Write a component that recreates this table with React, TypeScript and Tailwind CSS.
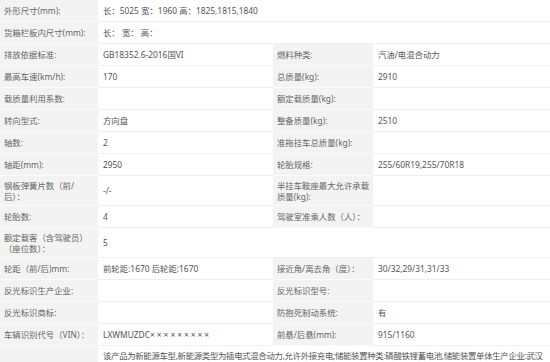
import React from "react";

// ─── Types ───────────────────────────────────────────────────────────────────

type Cell = { label: React.ReactNode; value?: React.ReactNode };

interface Row {
  left: Cell;
  right?: Cell; // no right cell → left value spans the remaining columns
}

// ─── Data ────────────────────────────────────────────────────────────────────

const rows: Row[] = [
  { left: { label: "外形尺寸(mm):", value: "长：5025 宽：1960 高：1825,1815,1840" } },
  { left: { label: "货箱栏板内尺寸(mm):", value: "长： 宽： 高：" } },
  {
    left: { label: "排放依据标准:", value: "GB18352.6-2016国VI" },
    right: { label: "燃料种类:", value: "汽油/电混合动力" },
  },
  {
    left: { label: "最高车速(km/h):", value: "170" },
    right: { label: "总质量(kg):", value: "2910" },
  },
  {
    left: { label: "载质量利用系数:" },
    right: { label: "额定载质量(kg):" },
  },
  {
    left: { label: "转向型式:", value: "方向盘" },
    right: { label: "整备质量(kg):", value: "2510" },
  },
  {
    left: { label: "轴数:", value: "2" },
    right: { label: "准拖挂车总质量(kg):" },
  },
  {
    left: { label: "轴距(mm):", value: "2950" },
    right: { label: "轮胎规格:", value: "255/60R19,255/70R18" },
  },
  {
    left: {
      label: (
        <>
          钢板弹簧片数（前/
          <br />
          后）：
        </>
      ),
      value: "-/-",
    },
    right: {
      label: (
        <>
          半挂车鞍座最大允许承载
          <br />
          质量(kg):
        </>
      ),
    },
  },
  {
    left: { label: "轮胎数:", value: "4" },
    right: { label: "驾驶室准乘人数（人）：" },
  },
  {
    left: {
      label: (
        <>
          额定载客（含驾驶员）
          <br />
          （座位数）：
        </>
      ),
      value: "5",
    },
  },
  {
    left: { label: "轮距（前/后)mm:", value: "前轮距:1670 后轮距:1670" },
    right: { label: "接近角/离去角（度）：", value: "30/32,29/31,31/33" },
  },
  {
    left: { label: "反光标识生产企业:" },
    right: { label: "反光标识型号:" },
  },
  {
    left: { label: "反光标识商标:" },
    right: { label: "防抱死制动系统:", value: "有" },
  },
  {
    left: {
      label: "车辆识别代号（VIN）：",
      value: (
        <>
          LXWMUZDC<span className="tracking-[2px]">×××××××××</span>
        </>
      ),
    },
    right: { label: "前悬/后悬(mm):", value: "915/1160" },
  },
  {
    left: {
      label: "",
      value: (
        <span className="tracking-[-0.3px]">
          该产品为新能源车型,新能源类型为插电式混合动力,允许外接充电;储能装置种类:磷酸铁锂蓄电池,储能装置单体生产企业:武汉弗迪电池有限公司;储能装置总成生产企业:比亚迪汽车工业有限公司
        </span>
      ),
    },
  },
];

// ─── Cells ───────────────────────────────────────────────────────────────────

const base = "flex items-center min-h-[22px] py-[3.5px] leading-[11px] border-b";

function Label({ children }: { children: React.ReactNode }) {
  return (
    <div className={`${base} pl-[4px] whitespace-nowrap bg-[#f3f3f3] border-[#fbfbfb] text-[#666]`}>
      {children}
    </div>
  );
}

function Value({ children, wide }: { children?: React.ReactNode; wide?: boolean }) {
  return (
    <div className={`${base} pl-[5px] pr-[2px] bg-white border-[#efefef] text-[#555] ${wide ? "col-span-3" : ""}`}>
      {children}
    </div>
  );
}

// ─── Page ────────────────────────────────────────────────────────────────────

export default function App() {
  return (
    <div
      className="w-[550px] h-[362px] overflow-hidden bg-white text-[8.4px]"
      style={{ fontFamily: '"Noto Sans", "Noto Sans CJK SC", sans-serif' }}
    >
      <div className="grid grid-cols-[98px_175px_100px_177px]">
        {rows.map((r, i) => (
          <React.Fragment key={i}>
            <Label>{r.left.label}</Label>
            <Value wide={!r.right}>{r.left.value}</Value>
            {r.right && (
              <>
                <Label>{r.right.label}</Label>
                <Value>{r.right.value}</Value>
              </>
            )}
          </React.Fragment>
        ))}
      </div>
    </div>
  );
}
